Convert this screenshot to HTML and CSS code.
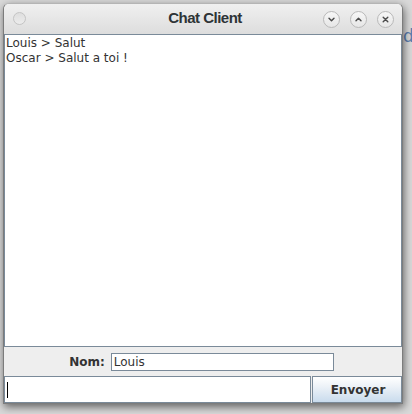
FILE: index.html
```html
<!DOCTYPE html>
<html>
<head>
<meta charset="utf-8">
<link rel="stylesheet" href="styles.css">
</head>
<body>
<div class="desk">
  <span class="bg-frag frag-d">d</span>
  <div class="window">
    <div class="titlebar">
      <span class="dot"></span>
      <span class="title">Chat Client</span>
      <div class="controls">
        <span class="ctl"><svg width="9" height="9" viewBox="0 0 9 9"><path d="M2 3.2 L4.5 5.8 L7 3.2" fill="none" stroke="#4a4a4a" stroke-width="1.4" stroke-linecap="round" stroke-linejoin="round"/></svg></span>
        <span class="ctl"><svg width="9" height="9" viewBox="0 0 9 9"><path d="M2 5.8 L4.5 3.2 L7 5.8" fill="none" stroke="#4a4a4a" stroke-width="1.4" stroke-linecap="round" stroke-linejoin="round"/></svg></span>
        <span class="ctl"><svg width="9" height="9" viewBox="0 0 9 9"><path d="M2.2 2.2 L6.8 6.8 M6.8 2.2 L2.2 6.8" fill="none" stroke="#4a4a4a" stroke-width="1.4" stroke-linecap="round"/></svg></span>
      </div>
    </div>
    <div class="content">
      <div class="log">Louis &gt; Salut<br>Oscar &gt; Salut a toi !</div>
      <div class="namerow">
        <span class="label">Nom:</span>
        <div class="field name">Louis</div>
      </div>
      <div class="sendrow">
        <div class="field msg"><span class="caret"></span></div>
        <div class="btn">Envoyer</div>
      </div>
    </div>
  </div>
</div>
</body>
</html>
```
FILE: styles.css
```css
html, body {
  margin: 0;
  padding: 0;
}
body {
  width: 412px;
  height: 414px;
  overflow: hidden;
  background: #dcdcdc;
  font-family: "DejaVu Sans", sans-serif;
}
.desk {
  position: relative;
  width: 412px;
  height: 414px;
  padding: 3px 0 0 3px;
  box-sizing: border-box;
  background: #d9d9d9;
}
.bg-frag {
  position: absolute;
  color: #5b7fb1;
  font-family: "DejaVu Sans", sans-serif;
}
.frag-d {
  left: 403px;
  top: 26px;
  font-size: 17px;
}
.window {
  position: relative;
  width: 400px;
  height: 401px;
  box-sizing: border-box;
  border: 1px solid #7c7c7c;
  border-top-color: #b5b5b5;
  border-radius: 6px 6px 0 0;
  background: #eeeeee;
  box-shadow: 1px 3px 9px rgba(0, 0, 0, 0.55);
  display: flex;
  flex-direction: column;
}
.titlebar {
  height: 30px;
  flex: none;
  display: flex;
  align-items: center;
  position: relative;
  border-radius: 5px 5px 0 0;
  background: linear-gradient(to bottom, #f0f0f0, #dddddd);
}
.dot {
  width: 11px;
  height: 11px;
  border-radius: 50%;
  border: 1px solid #c4c4c4;
  background: linear-gradient(to bottom, #dedede, #ececec);
  margin-left: 9px;
  margin-top: -2px;
}
.title {
  position: absolute;
  left: 0;
  right: 0;
  top: 5px;
  text-align: center;
  font-family: "Liberation Sans", sans-serif;
  font-weight: bold;
  font-size: 15px;
  letter-spacing: -0.5px;
  color: #2e3436;
  padding-left: 4px;
}
.controls {
  margin-left: auto;
  margin-right: 8px;
  margin-top: 1px;
  display: flex;
  gap: 10px;
}
.ctl {
  width: 15px;
  height: 15px;
  border-radius: 50%;
  border: 1px solid #b9b9b9;
  background: linear-gradient(to bottom, #f7f7f7, #e6e6e6);
  display: flex;
  align-items: center;
  justify-content: center;
  position: relative;
  z-index: 1;
}
.content {
  flex: 1;
  display: flex;
  flex-direction: column;
}
.log {
  height: 313px;
  box-sizing: border-box;
  border: 1px solid #7a8a99;
  background: #ffffff;
  color: #333333;
  font-size: 12px;
  line-height: 15px;
  padding: 1px 0 0 1px;
}
.namerow {
  height: 29px;
  flex: none;
  display: flex;
  align-items: center;
  justify-content: center;
  gap: 6px;
  padding-right: 3px;
}
.label {
  font-weight: bold;
  font-size: 12px;
  color: #333333;
}
.field {
  box-sizing: border-box;
  border: 1px solid #7a8a99;
  background: #ffffff;
  color: #333333;
  font-size: 12px;
}
.field.name {
  width: 223px;
  height: 18px;
  line-height: 16px;
  padding-left: 2px;
}
.sendrow {
  flex: 1;
  display: flex;
}
.field.msg {
  width: 307px;
  display: flex;
  align-items: center;
  padding-left: 1px;
}
.caret {
  width: 1px;
  height: 16px;
  background: #000000;
  margin-left: 1px;
}
.btn {
  flex: 1;
  box-sizing: border-box;
  border: 1px solid #7a8a99;
  margin-left: 1px;
  background: linear-gradient(to bottom, #ffffff 0%, #eef3f8 35%, #c9dbed 100%);
  display: flex;
  align-items: center;
  justify-content: center;
  font-weight: bold;
  font-size: 12px;
  color: #333333;
  padding-left: 2px;
}
```
